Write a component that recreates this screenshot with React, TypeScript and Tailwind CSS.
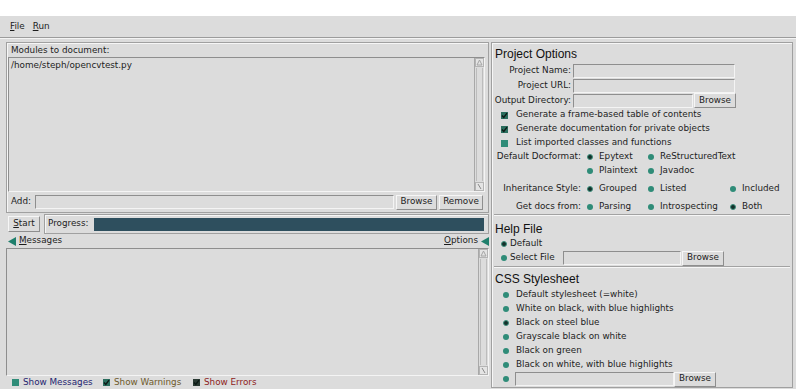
import React from "react";

// Tk-style epydoc GUI

const Sunken: React.FC<{ className?: string; children?: React.ReactNode }> = ({ className, children }) => (
  <div
    className={
      "border border-t-[#8e8e8e] border-l-[#8e8e8e] border-b-[#f4f4f4] border-r-[#f4f4f4] bg-[#dcdcdc] " +
      (className || "")
    }
  >
    {children}
  </div>
);

const Button: React.FC<{ label: React.ReactNode; className?: string }> = ({ label, className }) => (
  <div
    className={
      "h-[15px] flex items-center justify-center border border-t-[#f6f6f6] border-l-[#f6f6f6] border-b-[#8e8e8e] border-r-[#8e8e8e] " +
      (className || "")
    }
  >
    {label}
  </div>
);

const Radio: React.FC<{ on?: boolean }> = ({ on }) =>
  on ? (
    <span className="block w-[6px] h-[6px] rounded-full bg-[#14302a] border border-[#3c8f7c] shrink-0" />
  ) : (
    <span className="block w-[6px] h-[6px] rounded-full bg-[#2f8c78] shrink-0" />
  );

const Check: React.FC<{ on?: boolean; dark?: boolean }> = ({ on, dark }) => (
  <svg width="7" height="7" viewBox="0 0 7 7" className="shrink-0">
    <rect width="7" height="7" fill={on ? (dark ? "#2a3a33" : "#2b6e5e") : "#2f8c78"} />
    {on && <path d="M1 3.5 L2.8 5.4 L6 1.2" stroke="#0d1a16" strokeWidth="1.4" fill="none" />}
  </svg>
);

const Tri: React.FC = () => (
  <svg width="8" height="9" viewBox="0 0 8 9" className="shrink-0">
    <path d="M0 4.5 L8 0 L8 9 Z" fill="#1f7f6c" />
  </svg>
);

const ScrollBar: React.FC = () => (
  <div className="w-[10px] flex flex-col border-l border-[#a8a8a8]">
    <svg width="9" height="9" viewBox="0 0 9 9">
      <rect x="0.5" y="0.5" width="8" height="8" fill="#e4e4e4" stroke="#b4b4b4" />
      <path d="M2 7 L4.5 2 L7 7 Z" fill="none" stroke="#a4a4a4" />
    </svg>
    <div className="flex-1 border-x border-[#bcbcbc] mx-[1px] my-[1px]" />
    <svg width="9" height="9" viewBox="0 0 9 9">
      <rect x="0.5" y="0.5" width="8" height="8" fill="#e4e4e4" stroke="#b4b4b4" />
      <path d="M3 2 L6 7" fill="none" stroke="#8a8a8a" />
    </svg>
  </div>
);

const Separator: React.FC = () => (
  <div className="mx-[2px] border-t border-[#a2a2a2] border-b border-b-[#f6f6f6]" />
);

const Label: React.FC<{ text: string; w: string }> = ({ text, w }) => (
  <div className={"flex justify-end shrink-0 " + w}>
    <span className="whitespace-nowrap">{text}</span>
  </div>
);

const App: React.FC = () => {
  const cssSheets = [
    "Default stylesheet (=white)",
    "White on black, with blue highlights",
    "Black on steel blue",
    "Grayscale black on white",
    "Black on green",
    "Black on white, with blue highlights",
  ];

  return (
    <div className="w-[796px] h-[389px] bg-[#dcdcdc] flex flex-col overflow-hidden whitespace-nowrap text-[8.8px] text-[#1c1c1c] font-['DejaVu_Sans',sans-serif]">
      {/* title strip */}
      <div className="h-[16px] bg-white shrink-0" />
      {/* menu bar */}
      <div className="h-[22px] shrink-0 flex items-center gap-[8px] pl-[10px] pt-[1px] border-b border-[#9c9c9c]">
        <span>
          <u>F</u>ile
        </span>
        <span>
          <u>R</u>un
        </span>
      </div>

      <div className="flex-1 flex pl-[6px] pt-[3px] gap-[2px] border-t border-[#f4f4f4]">
        {/* left column */}
        <div className="w-[483px] flex flex-col">
          {/* modules frame */}
          <div className="h-[171px] flex flex-col border border-[#a0a0a0] shadow-[inset_1px_1px_0_#f6f6f6]">
            <div className="h-[14px] flex items-center pl-[4px] pt-[2px]">Modules to document:</div>
            <Sunken className="h-[135px] ml-[1px] mr-[3px] flex">
              <div className="flex-1 pl-[2px] pt-[1px] leading-[12px]">/home/steph/opencvtest.py</div>
              <ScrollBar />
            </Sunken>
            <div className="flex-1 flex items-center pl-[4px] pr-[5px] gap-[2px]">
              <span className="w-[22px]">Add:</span>
              <Sunken className="h-[14px] flex-1" />
              <Button label="Browse" className="w-[41px]" />
              <Button label="Remove" className="w-[44px]" />
            </div>
          </div>

          {/* start / progress */}
          <div className="h-[20px] flex items-center mt-[1px] gap-[4px]">
            <Button
              label={
                <span>
                  <u>S</u>tart
                </span>
              }
              className="w-[32px] h-[16px] ml-[2px]"
            />
            <div className="flex-1 h-[20px] flex items-center border border-[#a0a0a0] shadow-[inset_1px_1px_0_#f6f6f6] pl-[3px] pr-[4px] gap-[3px]">
              <span className="w-[43px]">Progress:</span>
              <div className="flex-1 h-[13px] bg-[#2e4f5e]" />
            </div>
          </div>

          {/* messages header */}
          <div className="h-[14px] flex items-center pl-[2px] gap-[3px]">
            <Tri />
            <span>
              <u>M</u>essages
            </span>
            <span className="ml-auto">
              <u>O</u>ptions
            </span>
            <Tri />
          </div>

          {/* messages box */}
          <Sunken className="h-[128px] flex justify-end">
            <ScrollBar />
          </Sunken>

          {/* filter checks */}
          <div className="flex-1 flex items-center pl-[6px]">
            <div className="w-[91px] flex items-center gap-[4px]">
              <Check />
              <span className="text-[#252570]">Show Messages</span>
            </div>
            <div className="w-[90px] flex items-center gap-[4px]">
              <Check on />
              <span className="text-[#6e5a2a]">Show Warnings</span>
            </div>
            <div className="flex items-center gap-[4px]">
              <Check on dark />
              <span className="text-[#8e1c1c]">Show Errors</span>
            </div>
          </div>
        </div>

        {/* right column */}
        <div className="w-[302px] h-[346px] border border-[#a0a0a0] shadow-[inset_1px_1px_0_#f6f6f6] flex flex-col">
          <div className="h-[20px] pt-[2px] pl-[3px] flex items-center text-[12px] font-['Liberation_Sans',sans-serif] text-[#111]">
            Project Options
          </div>
          {["Project Name:", "Project URL:"].map((l) => (
            <div key={l} className="h-[15px] flex items-center pl-[3px] gap-[2px]">
              <Label text={l} w="w-[76px]" />
              <Sunken className="w-[162px] h-[14px]" />
            </div>
          ))}
          <div className="h-[15px] flex items-center pl-[3px] gap-[2px]">
            <Label text="Output Directory:" w="w-[76px]" />
            <Sunken className="w-[120px] h-[14px]" />
            <Button label="Browse" className="w-[42px] -ml-[1px]" />
          </div>
          {[
            ["Generate a frame-based table of contents", true],
            ["Generate documentation for private objects", true],
            ["List imported classes and functions", false],
          ].map(([l, on]) => (
            <div key={l as string} className="h-[14px] flex items-center pl-[9px] gap-[8px]">
              <Check on={on as boolean} />
              <span>{l}</span>
            </div>
          ))}

          <div className="h-[14px] flex items-center pl-[3px]">
            <Label text="Default Docformat:" w="w-[86px]" />
            <div className="w-[61px] flex items-center gap-[6px] pl-[6px]">
              <Radio on />
              <span>Epytext</span>
            </div>
            <div className="flex items-center gap-[6px] pl-[6px]">
              <Radio />
              <span>ReStructuredText</span>
            </div>
          </div>
          <div className="h-[14px] flex items-center pl-[3px]">
            <span className="w-[86px]" />
            <div className="w-[61px] flex items-center gap-[6px] pl-[6px]">
              <Radio />
              <span>Plaintext</span>
            </div>
            <div className="flex items-center gap-[6px] pl-[6px]">
              <Radio />
              <span>Javadoc</span>
            </div>
          </div>

          {[
            ["Inheritance Style:", ["Grouped", "Listed", "Included"], 0, "h-[22px]"],
            ["Get docs from:", ["Parsing", "Introspecting", "Both"], 2, "h-[14px]"],
          ].map(([label, opts, sel, h]) => (
            <div key={label as string} className={"flex items-center pl-[3px] " + h}>
              <Label text={label as string} w="w-[86px]" />
              {(opts as string[]).map((o, i) => (
                <div
                  key={o}
                  className={
                    "flex items-center gap-[6px] pl-[6px] " + (i === 0 ? "w-[61px]" : i === 1 ? "w-[82px]" : "")
                  }
                >
                  <Radio on={i === sel} />
                  <span>{o}</span>
                </div>
              ))}
            </div>
          ))}

          <Separator />

          <div className="h-[21px] pt-[4px] pl-[3px] flex items-center text-[12px] font-['Liberation_Sans',sans-serif] text-[#111]">
            Help File
          </div>
          <div className="h-[14px] flex items-center pl-[9px] gap-[3px]">
            <Radio on />
            <span>Default</span>
          </div>
          <div className="h-[14px] flex items-center pl-[9px] gap-[3px]">
            <Radio />
            <span className="w-[50px]">Select File</span>
            <Sunken className="w-[118px] h-[14px]" />
            <Button label="Browse" className="w-[42px] -ml-[2px]" />
          </div>

          <div className="mt-[1px]">
            <Separator />
          </div>

          <div className="h-[20px] pt-[2px] pl-[3px] flex items-center text-[12px] font-['Liberation_Sans',sans-serif] text-[#111]">
            CSS Stylesheet
          </div>
          {cssSheets.map((s, i) => (
            <div key={s} className="h-[14px] flex items-center pl-[11px] gap-[7px]">
              <Radio on={i === 2} />
              <span>{s}</span>
            </div>
          ))}
          <div className="h-[14px] flex items-center pl-[11px] gap-[6px]">
            <Radio />
            <Sunken className="w-[159px] h-[14px]" />
            <Button label="Browse" className="w-[42px] -ml-[6px]" />
          </div>
        </div>
      </div>
    </div>
  );
};

export default App;
